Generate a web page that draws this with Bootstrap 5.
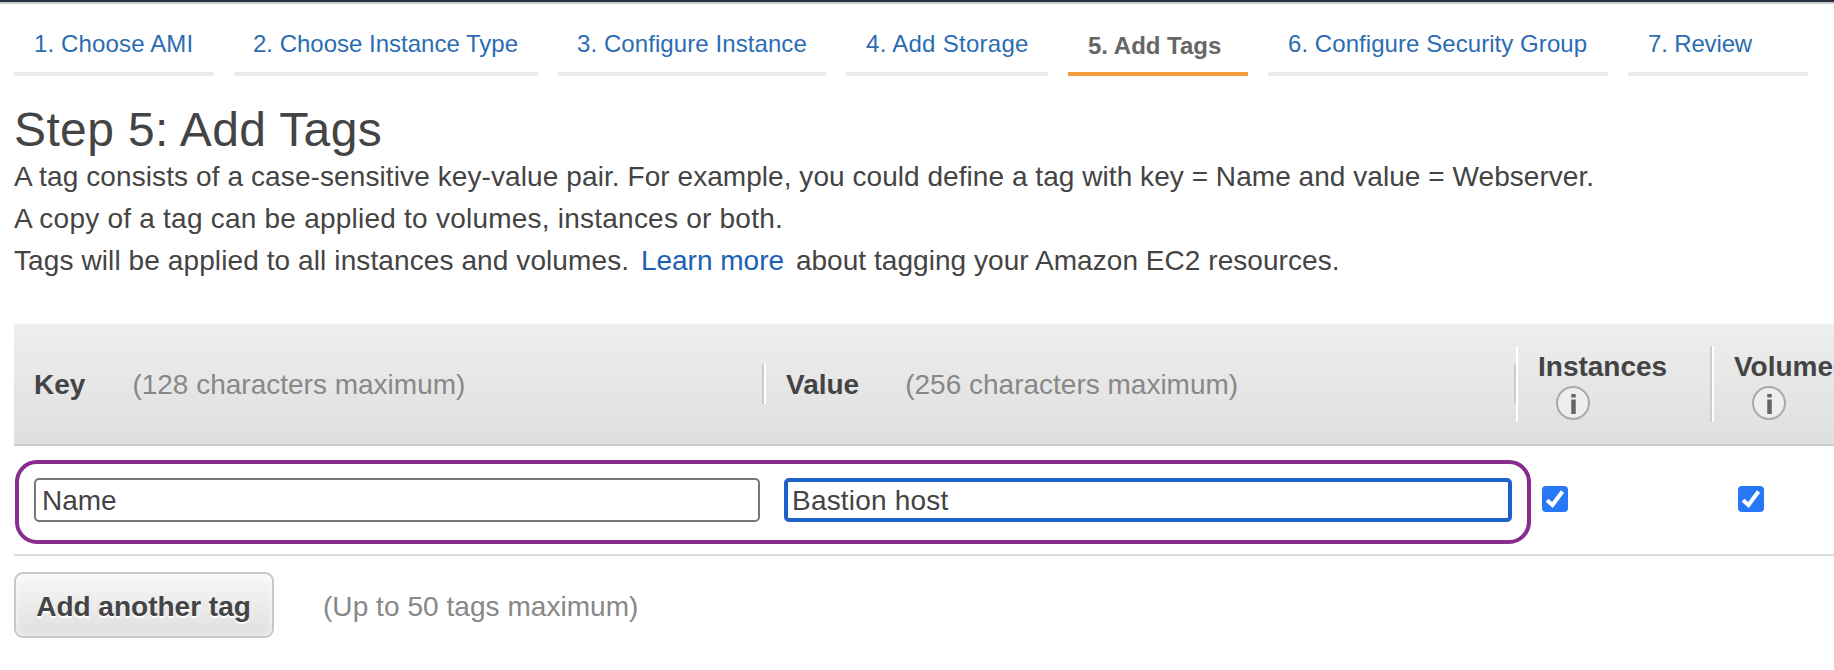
<!DOCTYPE html>
<html lang="en">
<head>
<meta charset="utf-8">
<meta name="viewport" content="width=device-width, initial-scale=1">
<title>Step 5: Add Tags</title>
<link href="https://cdn.jsdelivr.net/npm/bootstrap@5.3.0/dist/css/bootstrap.min.css" rel="stylesheet">
<style>
  body { font-family: "Liberation Sans", Arial, sans-serif; font-size: 28px; line-height: 42px; color: #444; background: #fff; overflow: hidden; height: 670px; }
  .top-strip { height: 4px; background: #232f3e; border-bottom: 2px solid #ccc; }
  .wizard { gap: 20px; padding-left: 14px; height: 72px; }
  .wizard .nav-link { border-bottom: 4px solid #ebebeb; border-radius: 0; padding: 22px 0 0 20px; height: 72px; font-size: 24px; line-height: 36px; color: #2b6cb3; white-space: nowrap; flex: none; }
  .wizard .nav-link.active { border-color: #f19c3e; color: #666; font-weight: bold; padding-top: 24px; }
  .wizard .w1 { width: 200px; letter-spacing: .14px; }
  .wizard .w2 { width: 304px; padding-left: 19px; }
  .wizard .w3 { width: 268px; padding-left: 19px; letter-spacing: .08px; }
  .wizard .w4 { width: 202px; letter-spacing: .28px; }
  .wizard .w5 { width: 180px; }
  .wizard .w6 { width: 340px; letter-spacing: .06px; }
  .wizard .w7 { width: 180px; letter-spacing: -.15px; }
  .main-area { padding-left: 14px; }
  .step-title { font-size: 48px; line-height: 58px; margin: 25px 0 -3px; font-weight: 400; letter-spacing: .38px; }
  .intro { height: 168px; white-space: nowrap; }
  .intro a { color: #1b60b4; text-decoration: none; margin: 0 4px; }
  .ls-a { letter-spacing: .1px; }
  .ls-b { letter-spacing: .05px; }
  .ls-c { letter-spacing: .23px; }
  .tag-head { height: 122px; border-bottom: 2px solid #ccc; background: linear-gradient(#eee, #dfdfdf); }
  .tag-head > div { flex: none; }
  .col-key { width: 750px; }
  .col-value { width: 752px; }
  .col-inst { width: 196px; }
  .tag-head > .col-vol { flex: 1 1 0; min-width: 0; overflow: hidden; }
  .divide-r { border-right: 2px solid #ccc; }
  .divide-l { border-left: 2px solid #fff; }
  .short { height: 40px; line-height: 42px; padding-left: 20px; }
  .tall { height: 76px; padding-left: 20px; line-height: 42px; }
  .tall svg { display: block; margin: -2px 0 0 18px; }
  .hint { color: #888; }
  .short .hint { margin-left: 47px; }
  .short.col-value .hint { margin-left: 46px; }
  .tag-line { height: 110px; border-bottom: 2px solid #ddd; }
  .outlined { flex: none; margin: 4px 11px 0 1px; width: 1516px; height: 84px; border: 4px solid #862d8d; border-radius: 22px; padding: 0 0 4px 15px; gap: 24px; }
  .outlined input { height: 44px; font: inherit; color: #444; border-radius: 5px; outline: 0; background: #fff; }
  .outlined .in-key { width: 726px; border: 2px solid #767676; padding: 2px 0 0 6px; }
  .outlined .in-val { width: 728px; border: 4px solid #1e62ca; padding: 2px 0 0 4px; letter-spacing: .2px; }
  .tick.form-check-input { flex: none; width: 26px; height: 26px; margin: 0 0 2px; border: 0; border-radius: 4px; }
  .tick.form-check-input:checked { background: #2678f6 url("data:image/svg+xml,%3csvg xmlns='http://www.w3.org/2000/svg' viewBox='0 0 26 26'%3e%3cpath fill='none' stroke='%23fff' stroke-width='4' d='M5 14.2l5.500 4.800L20.500 5.500'/%3e%3c/svg%3e") center/26px 26px no-repeat; }
  .tick.form-check-input + .tick { margin-left: 170px; }
  .add-btn { width: 260px; height: 66px; margin-top: 16px; padding: 3px 1px 0 0; border: 2px solid #c8c8c8; border-radius: 9px; font-size: 28px; font-weight: bold; line-height: 58px; color: #444; background: linear-gradient(#f8f8f8, #dfdfdf); box-shadow: inset 0 0 6px rgba(255,255,255,.8); text-shadow: 0 2px 0 #fff; }
  .limit-note { margin: 30px 0 0 49px; letter-spacing: .05px; }
</style>
</head>
<body>
<div class="top-strip"></div>
<nav class="nav flex-nowrap wizard">
  <a class="nav-link w1" href="#">1. Choose AMI</a>
  <a class="nav-link w2" href="#">2. Choose Instance Type</a>
  <a class="nav-link w3" href="#">3. Configure Instance</a>
  <a class="nav-link w4" href="#">4. Add Storage</a>
  <a class="nav-link active w5" href="#">5. Add Tags</a>
  <a class="nav-link w6" href="#">6. Configure Security Group</a>
  <a class="nav-link w7" href="#">7. Review</a>
</nav>
<main class="main-area">
  <h1 class="step-title">Step 5: Add Tags</h1>
  <div class="intro">
    <div><span class="ls-a">A tag consists of a case-sensitive key-value pair.</span> <span class="ls-b">For example, you could define a tag with key = Name and value = Webserver.</span></div>
    <div class="ls-c">A copy of a tag can be applied to volumes, instances or both.</div>
    <div><span class="ls-a">Tags will be applied to all instances and volumes.</span> <a href="#">Learn more</a> <span class="ls-b">about tagging your Amazon EC2 resources.</span></div>
  </div>
  <div class="tag-head d-flex align-items-center">
    <div class="col-key short divide-r d-flex"><b>Key</b><span class="hint">(128 characters maximum)</span></div>
    <div class="col-value short divide-l divide-r d-flex"><b>Value</b><span class="hint">(256 characters maximum)</span></div>
    <div class="col-inst tall divide-l divide-r"><b>Instances</b>
      <svg width="34" height="34" viewBox="0 0 34 34"><circle cx="17" cy="17" r="16" fill="#eee" stroke="#aaa" stroke-width="2"/><path d="M17.500 8v3.500M17.500 13.500v14.500" stroke="#666" stroke-width="4.500"/></svg>
    </div>
    <div class="col-vol tall divide-l"><b>Volumes</b>
      <svg width="34" height="34" viewBox="0 0 34 34"><circle cx="17" cy="17" r="16" fill="#eee" stroke="#aaa" stroke-width="2"/><path d="M17.500 8v3.500M17.500 13.500v14.500" stroke="#666" stroke-width="4.500"/></svg>
    </div>
  </div>
  <div class="tag-line d-flex align-items-center">
    <div class="outlined d-flex align-items-center">
      <input class="in-key" type="text" value="Name" aria-label="Key">
      <input class="in-val" type="text" value="Bastion host" aria-label="Value">
    </div>
    <input class="form-check-input tick" type="checkbox" checked aria-label="Instances">
    <input class="form-check-input tick" type="checkbox" checked aria-label="Volumes">
  </div>
  <div class="d-flex">
    <button class="btn add-btn" type="button">Add another tag</button>
    <span class="hint limit-note">(Up to 50 tags maximum)</span>
  </div>
</main>
<script src="https://cdn.jsdelivr.net/npm/bootstrap@5.3.0/dist/js/bootstrap.bundle.min.js"></script>
</body>
</html>
